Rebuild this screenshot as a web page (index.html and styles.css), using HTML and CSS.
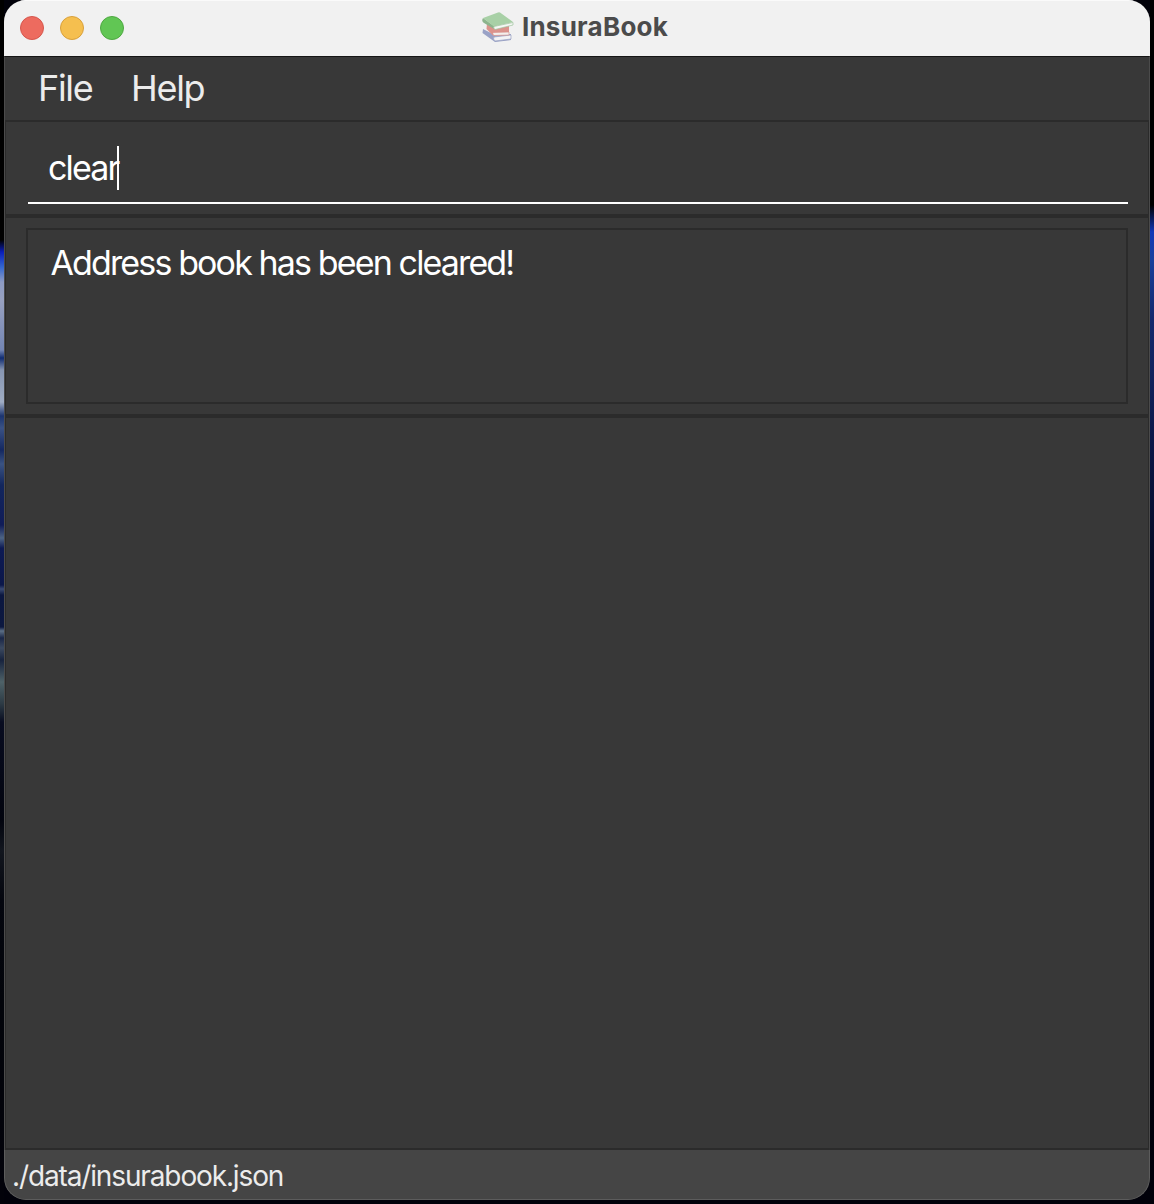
FILE: index.html
```html
<!DOCTYPE html>
<html lang="en">
<head>
<meta charset="utf-8">
<title>InsuraBook</title>
<link rel="stylesheet" href="styles.css">
</head>
<body>
<main class="window">
  <header class="titlebar">
    <div class="controls">
      <span class="control close"></span>
      <span class="control minimize"></span>
      <span class="control zoom"></span>
    </div>
    <div class="title">
      <svg class="books" viewBox="0 0 34 34" width="34" height="34" aria-hidden="true">
        <path d="M2 20L1.500 24L14 33L30 31V25L14 26Z" fill="#9aa2c6"/>
        <path d="M13 28L30 26V30L14 32Q11.500 30 13 28Z" fill="#f3f3f5" stroke="#98a0c2" stroke-width=".7"/>
        <path d="M6 14L5.500 20L12 26.500L28 26V17L14 19Z" fill="#dc938c"/>
        <path d="M12 23.500L28 23V26L13 26.500Q11 25 12 23.500Z" fill="#f3efed" stroke="#d58c85" stroke-width=".6"/>
        <path d="M2 9Q0 12 3 14L14 20.500L13 17Z" fill="#8db48d"/>
        <path d="M2 9L17 3.500Q18 3 19 3.500L32 13L13 17.500Z" fill="#a8d0a6"/>
        <path d="M13 17.500L32 13.500V16L14 20.500Q12 19 13 17.500Z" fill="#f5f7f4" stroke="#9fc39d" stroke-width=".7"/>
      </svg>
      <span class="name">InsuraBook</span>
    </div>
  </header>
  <nav class="menubar">
    <span class="menu file">File</span>
    <span class="menu help">Help</span>
  </nav>
  <section class="command-pane">
    <div class="command-box"><span class="command">clear</span><span class="caret"></span></div>
  </section>
  <section class="result-pane">
    <div class="result-box"><span class="result">Address book has been cleared!</span></div>
  </section>
  <section class="list-pane"></section>
  <footer class="statusbar"><span class="path">./data/insurabook.json</span></footer>
</main>
</body>
</html>
```
FILE: styles.css
```css
* { box-sizing: border-box; }

body {
  margin: 0;
  height: 1204px;
  padding: 0 4px 4px;
  overflow: hidden;
  font-family: Inter, "Liberation Sans", sans-serif;
  background:
    linear-gradient(#000 205px, #1238b8 232px, #18409c 260px, #14286c 320px, #12235e 370px, #0b1748 440px, #050a24 560px, #020210 760px, #01010a) right / 4px 100% no-repeat,
    linear-gradient(#000 240px, #0a1ebc 252px, #3366d0 267px, #8d9bc4 282px, #98a1c0 300px, #7486b4 350px, #102c72 358px, #8796b2 370px, #a0adc4 402px, #1b3470 416px, #3a5285 428px, #142861 450px, #3a5382 464px, #12265d 485px, #101c58 525px, #4d6484 538px, #0d1a54 548px, #0b174a 585px, #3a4a72 589px, #0b1740 595px, #0c1840 627px, #5c6f86 631px, #1a2748 638px, #3c4a60 648px, #17233e 660px, #4e6268 682px, #2c3a44 704px, #080c20 722px, #02040e 820px, #12161e 850px, #04060e 900px, #02040a 1000px, #02020a) left / 4px 100% no-repeat,
    #01010a;
}

.window {
  display: flex;
  flex-direction: column;
  height: 1200px;
  overflow: hidden;
  border-radius: 22px;
  background: #383838;
}

.titlebar {
  display: grid;
  grid-template-columns: 1fr auto 1fr;
  align-items: center;
  height: 56px;
  flex: none;
  padding: 0 16px;
  background: #f1f1f1;
  box-shadow: inset 0 1px #fafafa;
}

.controls { display: flex; gap: 16px; }
.control { width: 24px; height: 24px; border-radius: 50%; border: 1px solid; }
.close { background: #ed6b5f; border-color: #d5574d; }
.minimize { background: #f5bf4f; border-color: #d8a03c; }
.zoom { background: #61c654; border-color: #4fa842; }

.title { display: flex; align-items: center; height: 54px; margin-bottom: 2px; padding-right: 5px; }
.books { margin: 0 7px 2px 0; }
.name { font-size: 26px; font-weight: 700; line-height: 32px; color: #4b4b4b; letter-spacing: 0.25px; }

.menubar {
  display: flex;
  height: 64px;
  flex: none;
  padding-left: 33px;
  border-top: 1px solid #151515;
  border-left: 1px solid #4b4b4b;
  border-right: 1px solid #4b4b4b;
  color: #ececec;
}
.menu { font-size: 36px; line-height: 62px; letter-spacing: -1.3px; }
.file { width: 93px; }

.command-pane, .result-pane, .list-pane {
  border: solid #2b2b2b;
  border-width: 2px 1px;
  outline: 1px solid #4b4b4b;
  margin: 0 1px;
  clip-path: inset(0 -1px);
}

.command-pane { height: 96px; flex: none; padding: 18px 20px 0 22px; }
.command-box {
  display: flex;
  align-items: flex-start;
  height: 64px;
  padding: 6px 0 0 20px;
  border-bottom: 2px solid #fff;
}
.command, .result { font-size: 34px; line-height: 44px; color: #fff; white-space: pre; letter-spacing: -1.87px; }
.caret { width: 2px; height: 44px; margin-left: -1px; background: #fff; }

.result-pane { height: 200px; flex: none; padding: 10px 20px 0 20px; }
.result-box { height: 176px; border: 2px solid #2b2b2b; padding: 11px 0 0 22.500px; }

.list-pane { flex: 1; }

.statusbar {
  height: 50px;
  flex: none;
  padding: 1px 0 0 7px;
  border: 1px solid #5c5c5c;
  border-top: 0;
  border-radius: 0 0 22px 22px;
  background: #454545;
  color: #ececec;
}
.path { font-size: 28px; line-height: 50px; letter-spacing: -1.13px; }
```
